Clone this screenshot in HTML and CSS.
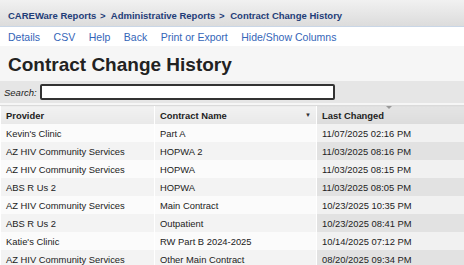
FILE: index.html
```html
<!DOCTYPE html>
<html lang="en">

<head>
  <meta charset="UTF-8" />
  <title>Contract Change History</title>
  <link rel="stylesheet" href="styles.css">
</head>

<body>
  <div class="crumbs">
    <a href="#">CAREWare Reports</a> <span class="sep">&gt;</span>
    <a href="#">Administrative Reports</a> <span class="sep">&gt;</span>
    <span>Contract Change History</span>
  </div>

  <nav class="actions">
    <a href="#">Details</a>
    <a href="#">CSV</a>
    <a href="#">Help</a>
    <a href="#">Back</a>
    <a href="#">Print or Export</a>
    <a href="#">Hide/Show Columns</a>
  </nav>

  <h1>Contract Change History</h1>

  <div class="search">
    <label for="q">Search:</label>
    <input id="q" type="text">
  </div>

  <table class="grid">
    <colgroup>
      <col class="c-prov">
      <col class="c-name">
      <col>
    </colgroup>
    <thead>
      <tr>
        <th>Provider</th>
        <th class="has-menu">Contract Name <span class="menu">&#9660;</span></th>
        <th class="sorted">Last Changed <span class="sort-mark"></span></th>
      </tr>
    </thead>
    <tbody>
      <tr><td>Kevin's Clinic</td><td>Part A</td><td class="sorted">11/07/2025 02:16 PM</td></tr>
      <tr><td>AZ HIV Community Services</td><td>HOPWA 2</td><td class="sorted">11/03/2025 08:16 PM</td></tr>
      <tr><td>AZ HIV Community Services</td><td>HOPWA</td><td class="sorted">11/03/2025 08:15 PM</td></tr>
      <tr><td>ABS R Us 2</td><td>HOPWA</td><td class="sorted">11/03/2025 08:05 PM</td></tr>
      <tr><td>AZ HIV Community Services</td><td>Main Contract</td><td class="sorted">10/23/2025 10:35 PM</td></tr>
      <tr><td>ABS R Us 2</td><td>Outpatient</td><td class="sorted">10/23/2025 08:41 PM</td></tr>
      <tr><td>Katie's Clinic</td><td>RW Part B 2024-2025</td><td class="sorted">10/14/2025 07:12 PM</td></tr>
      <tr><td>AZ HIV Community Services</td><td>Other Main Contract</td><td class="sorted">08/20/2025 09:34 PM</td></tr>
    </tbody>
  </table>
</body>

</html>
```

FILE: styles.css
```css
/* Base */
body {
  margin: 0;
  font-family: 'Liberation Sans', Arial, sans-serif;
  background-color: #f6f6f6;
  color: #222;
  overflow: hidden;
}

a {
  text-decoration: none;
}

/* Breadcrumb bar */
.crumbs {
  height: 27px;
  box-sizing: border-box;
  padding: 10px 8px 0;
  font-size: 9.5px;
  font-weight: bold;
  color: #1f3d78;
  background: linear-gradient(#f1f1f1, #dcdcdc);
  border-bottom: 1px solid #c9d6e6;
  white-space: nowrap;
}

.crumbs a {
  color: #1f3d78;
}

.crumbs .sep {
  margin: 0 3px 0 1px;
}

/* Action links */
.actions {
  display: flex;
  gap: 13.5px;
  height: 19px;
  align-items: center;
  padding: 0 8px;
  background-color: #fff;
}

.actions a {
  color: #3465b8;
  font-size: 10.5px;
}

/* Title */
h1 {
  margin: 8px 0 0 8px;
  height: 27px;
  font-size: 19px;
  line-height: 22px;
  color: #222;
}

/* Search bar */
.search {
  display: flex;
  align-items: center;
  gap: 3px;
  height: 22px;
  padding: 0 4px;
  background-color: #e6e6e6;
}

.search label {
  font-size: 9.5px;
  font-style: italic;
  color: #222;
}

.search input {
  width: 295px;
  height: 16px;
  box-sizing: border-box;
  margin: 0;
  padding: 0 2px;
  border: 2px solid #333;
  border-radius: 2px;
  background-color: #fff;
}

/* Table */
.grid {
  margin-top: 2px;
  width: 100%;
  table-layout: fixed;
  border-collapse: collapse;
  font-size: 9.4px;
}

.c-prov {
  width: 154px;
}

.c-name {
  width: 162px;
}

.grid th,
.grid td {
  height: 18px;
  padding: 0 5px;
  text-align: left;
  white-space: nowrap;
  overflow: hidden;
  border-left: 1px solid #fff;
}

.grid th {
  font-weight: bold;
  background: linear-gradient(#f2f2f2, #e9e9e9);
  border-top: 1px solid #dadada;
  position: relative;
}

.grid th.sorted {
  background: linear-gradient(#e4e4e4, #dcdcdc);
}

.grid td {
  background-color: #fbfbfb;
}

.grid tr:nth-child(even) td {
  background-color: #f3f3f3;
}

.grid td.sorted {
  background-color: #f1f1f1;
}

.grid tr:nth-child(even) td.sorted {
  background-color: #e2e2e2;
}

/* Column menu and sort marker */
.menu {
  position: absolute;
  right: 5px;
  top: 6px;
  font-size: 6px;
  color: #333;
}

.sort-mark {
  position: absolute;
  left: 69px;
  top: 0;
  width: 0;
  height: 0;
  border-left: 3px solid transparent;
  border-right: 3px solid transparent;
  border-top: 3px solid #999;
}
```
